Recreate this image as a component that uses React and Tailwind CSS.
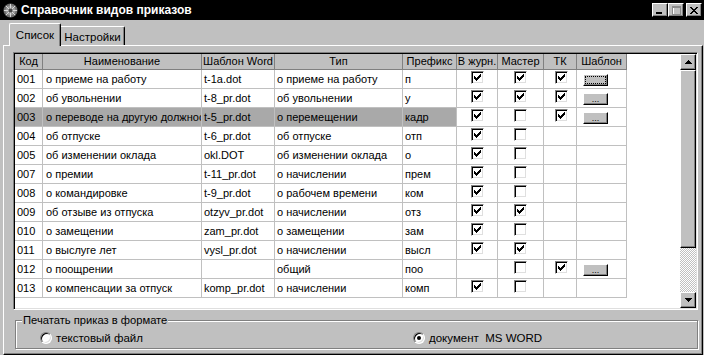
import React from "react";

const rows = [
  { code: "001", name: "о приеме на работу", tpl: "t-1a.dot", type: "о приеме на работу", prefix: "п", jr: true, master: true, tk: true, btn: "focus" },
  { code: "002", name: "об увольнении", tpl: "t-8_pr.dot", type: "об увольнении", prefix: "у", jr: true, master: true, tk: true, btn: "on" },
  { code: "003", name: "о переводе на другую должность", tpl: "t-5_pr.dot", type: "о перемещении", prefix: "кадр", jr: true, master: false, tk: true, btn: "on", sel: true },
  { code: "004", name: "об отпуске", tpl: "t-6_pr.dot", type: "об отпуске", prefix: "отп", jr: true, master: false },
  { code: "005", name: "об изменении оклада", tpl: "okl.DOT", type: "об изменении оклада", prefix: "о", jr: true, master: false },
  { code: "007", name: "о премии", tpl: "t-11_pr.dot", type: "о начислении", prefix: "прем", jr: true, master: false },
  { code: "008", name: "о командировке", tpl: "t-9_pr.dot", type: "о рабочем времени", prefix: "ком", jr: true, master: false },
  { code: "009", name: "об отзыве из отпуска", tpl: "otzyv_pr.dot", type: "о начислении", prefix: "отз", jr: true, master: true },
  { code: "010", name: "о замещении", tpl: "zam_pr.dot", type: "о замещении", prefix: "зам", jr: true, master: false },
  { code: "011", name: "о выслуге лет", tpl: "vysl_pr.dot", type: "о начислении", prefix: "высл", jr: true, master: true },
  { code: "012", name: "о поощрении", tpl: "", type: "общий", prefix: "поо", master: false, tk: true, btn: "on" },
  { code: "013", name: "о компенсации за отпуск", tpl: "komp_pr.dot", type: "о начислении", prefix: "комп", jr: true, master: false },
];

const headers = ["Код", "Наименование", "Шаблон Word", "Тип", "Префикс", "В журн.", "Мастер", "ТК", "Шаблон"];

const raised = "bg-[#c0c0c0] border border-t-white border-l-white border-r-black border-b-black shadow-[inset_-1px_-1px_0_#808080]";

function Check({ on }) {
  return (
    <span className="w-[13px] h-[13px] bg-white border border-t-[#808080] border-l-[#808080] border-r-white border-b-white shadow-[inset_1px_1px_0_#000,inset_-1px_-1px_0_#dfdfdf] flex items-center justify-center">
      {on && (
        <svg width="7" height="7" viewBox="0 0 7 7" shapeRendering="crispEdges">
          <path d="M6 0h1v1H6z M5 1h2v1H5z M0 2h1v1H0z M4 2h3v1H4z M0 3h2v1H0z M3 3h3v1H3z M0 4h5v1H0z M1 5h3v1H1z M2 6h1v1H2z" fill="#000" />
        </svg>
      )}
    </span>
  );
}

function DotsButton({ focus }) {
  return (
    <span className={`w-[25px] h-[12px] ${raised} flex items-center justify-center p-[1px]`}>
      <span className={`w-full h-full flex items-end justify-center text-[9px] leading-[8px] ${focus ? "border border-dotted border-black" : ""}`}>
        {focus ? "" : "..."}
      </span>
    </span>
  );
}

function Radio({ on }) {
  return (
    <span className="w-[12px] h-[12px] rounded-full bg-white border border-t-[#808080] border-l-[#808080] border-r-white border-b-white shadow-[inset_1px_1px_0_#000,inset_-1px_-1px_0_#dfdfdf] flex items-center justify-center">
      {on && <span className="w-[4px] h-[4px] rounded-full bg-black" />}
    </span>
  );
}

function Arrow({ down }) {
  return (
    <svg width="7" height="4" viewBox="0 0 7 4" shapeRendering="crispEdges">
      <path d={down ? "M0 0h7v1H0z M1 1h5v1H1z M2 2h3v1H2z M3 3h1v1H3z" : "M3 0h1v1H3z M2 1h3v1H2z M1 2h5v1H1z M0 3h7v1H0z"} fill="#000" />
    </svg>
  );
}

export default function App() {
  return (
    <div className="w-[704px] h-[355px] bg-[#c0c0c0] flex flex-col overflow-hidden font-['Liberation_Sans',Arial,sans-serif] text-black">
      {/* title bar */}
      <div className="h-[20px] bg-black flex items-center pl-[3px] pr-[2px]">
        <svg width="15" height="15" viewBox="0 0 15 15">
          <circle cx="7.5" cy="7.5" r="7" fill="#6e6e6e" />
          <circle cx="7.5" cy="7.5" r="5" fill="#9a9a9a" />
          <path d="M7.5 1v13M1 7.5h13M3 3l9 9M12 3l-9 9" stroke="#d8d8d8" strokeWidth="1" />
          <circle cx="7.5" cy="7.5" r="2" fill="#4a4a4a" />
        </svg>
        <span className="ml-[3px] text-white font-bold text-[12px] leading-[20px]">Справочник видов приказов</span>
        <div className="ml-auto flex items-center">
          <span className={`w-[16px] h-[14px] ${raised} flex items-end justify-start pl-[3px] pb-[2px]`}>
            <span className="w-[6px] h-[2px] bg-black" />
          </span>
          <span className={`w-[16px] h-[14px] ${raised} flex items-center justify-center`}>
            <svg width="9" height="9" viewBox="0 0 9 9" shapeRendering="crispEdges">
              <path d="M1 1h9v9H1z" fill="none" stroke="#fff" />
              <path d="M0 0h9v2H0z M0 0h1v9H0z M8 0h1v9H8z M0 8h9v1H0z" fill="#8a8a8a" />
            </svg>
          </span>
          <span className={`ml-[2px] w-[16px] h-[14px] ${raised} flex items-center justify-center`}>
            <svg width="8" height="7" viewBox="0 0 8 7" shapeRendering="crispEdges">
              <path d="M0 0h2v1H0z M6 0h2v1H6z M1 1h2v1H1z M5 1h2v1H5z M2 2h4v1H2z M3 3h2v1H3z M2 4h4v1H2z M1 5h2v1H1z M5 5h2v1H5z M0 6h2v1H0z M6 6h2v1H6z" fill="#000" />
            </svg>
          </span>
        </div>
      </div>

      {/* tabs */}
      <div className="h-[25px] flex items-end pl-[9px]">
        <div className="relative z-10 w-[52px] h-[23px] -mb-[1px] bg-[#c0c0c0] border-l border-t border-r border-l-white border-t-white border-r-black rounded-tl-[2px] rounded-tr-[2px] shadow-[inset_-1px_0_0_#808080] flex items-start justify-center pt-[4px] text-[11.5px] leading-[14px]">
          Список
        </div>
        <div className="w-[64px] h-[19px] bg-[#c0c0c0] border-t border-r border-t-white border-r-black rounded-tr-[2px] shadow-[inset_-1px_0_0_#808080] flex items-start justify-center pt-[3px] text-[11.5px] leading-[14px]">
          Настройки
        </div>
      </div>

      {/* panel */}
      <div className="w-[700px] h-[310px] ml-[3px] border border-l-white border-t-white border-r-black border-b-black shadow-[inset_-1px_-1px_0_#808080] pl-[9px] pt-[6px] flex flex-col">
        {/* grid */}
        <div className="w-[685px] h-[258px] border border-t-[#808080] border-l-[#808080] border-r-white border-b-white p-[1px] shadow-[inset_1px_1px_0_#000,inset_-1px_-1px_0_#dfdfdf] flex">
          <div className="flex-1 bg-white flex flex-col">
            <div className="grid grid-cols-[28px_159px_73px_128px_54px_41px_46px_33px_50px]">
              {headers.map((h) => (
                <div key={h} className="h-[16px] bg-[#c0c0c0] border-r border-b border-[#808080] text-center text-[11px] leading-[15px] whitespace-nowrap overflow-hidden">
                  {h}
                </div>
              ))}
            </div>
            {rows.map((r) => {
              const txt = `h-[19px] border-r border-b border-[#c0c0c0] pl-[2px] text-[11px] leading-[18px] whitespace-nowrap overflow-hidden ${r.sel ? "bg-[#a9a9a9]" : ""}`;
              const box = "h-[19px] border-r border-b border-[#c0c0c0] flex justify-center pt-[1px]";
              return (
                <div key={r.code} className="grid grid-cols-[28px_159px_73px_128px_54px_41px_46px_33px_50px]">
                  <div className={txt}>{r.code}</div>
                  <div className={`${txt} pl-[3px]`}>{r.name}</div>
                  <div className={txt}>{r.tpl}</div>
                  <div className={txt}>{r.type}</div>
                  <div className={txt}>{r.prefix}</div>
                  <div className={box}>{r.jr !== undefined && <Check on={r.jr} />}</div>
                  <div className={box}>{r.master !== undefined && <Check on={r.master} />}</div>
                  <div className={`${box} pl-[3px]`}>{r.tk !== undefined && <Check on={r.tk} />}</div>
                  <div className="h-[19px] border-r border-b border-[#c0c0c0] flex justify-start pl-[6px] pt-[4px]">
                    {r.btn && <DotsButton focus={r.btn === "focus"} />}
                  </div>
                </div>
              );
            })}
          </div>
          {/* scrollbar */}
          <div className="w-[16px] flex flex-col">
            <div className={`h-[16px] ${raised} flex items-center justify-center`}>
              <Arrow />
            </div>
            <div className={`h-[178px] ${raised}`} />
            <div className="flex-1 bg-[repeating-conic-gradient(#c0c0c0_0_25%,#ffffff_0_50%)] bg-[length:2px_2px]" />
            <div className={`h-[16px] ${raised} flex items-center justify-center`}>
              <Arrow down />
            </div>
          </div>
        </div>

        {/* print format */}
        <fieldset className="mt-[3px] ml-[2px] w-[683px] border border-[#808080] shadow-[inset_1px_1px_0_#fff,1px_1px_0_#fff]">
          <legend className="ml-[6px] px-[1px] bg-[#c0c0c0] text-[11.2px] leading-[14px]">Печатать приказ в формате</legend>
          <div className="flex items-center h-[14px] mt-[4px] mb-[3px] text-[11.5px] leading-[14px]">
            <div className="w-[397px] pl-[24px] flex items-center">
              <Radio />
              <span className="ml-[4px]">текстовый файл</span>
            </div>
            <div className="flex items-center">
              <Radio on />
              <span className="ml-[4px]">документ&nbsp; MS WORD</span>
            </div>
          </div>
        </fieldset>
      </div>
    </div>
  );
}
